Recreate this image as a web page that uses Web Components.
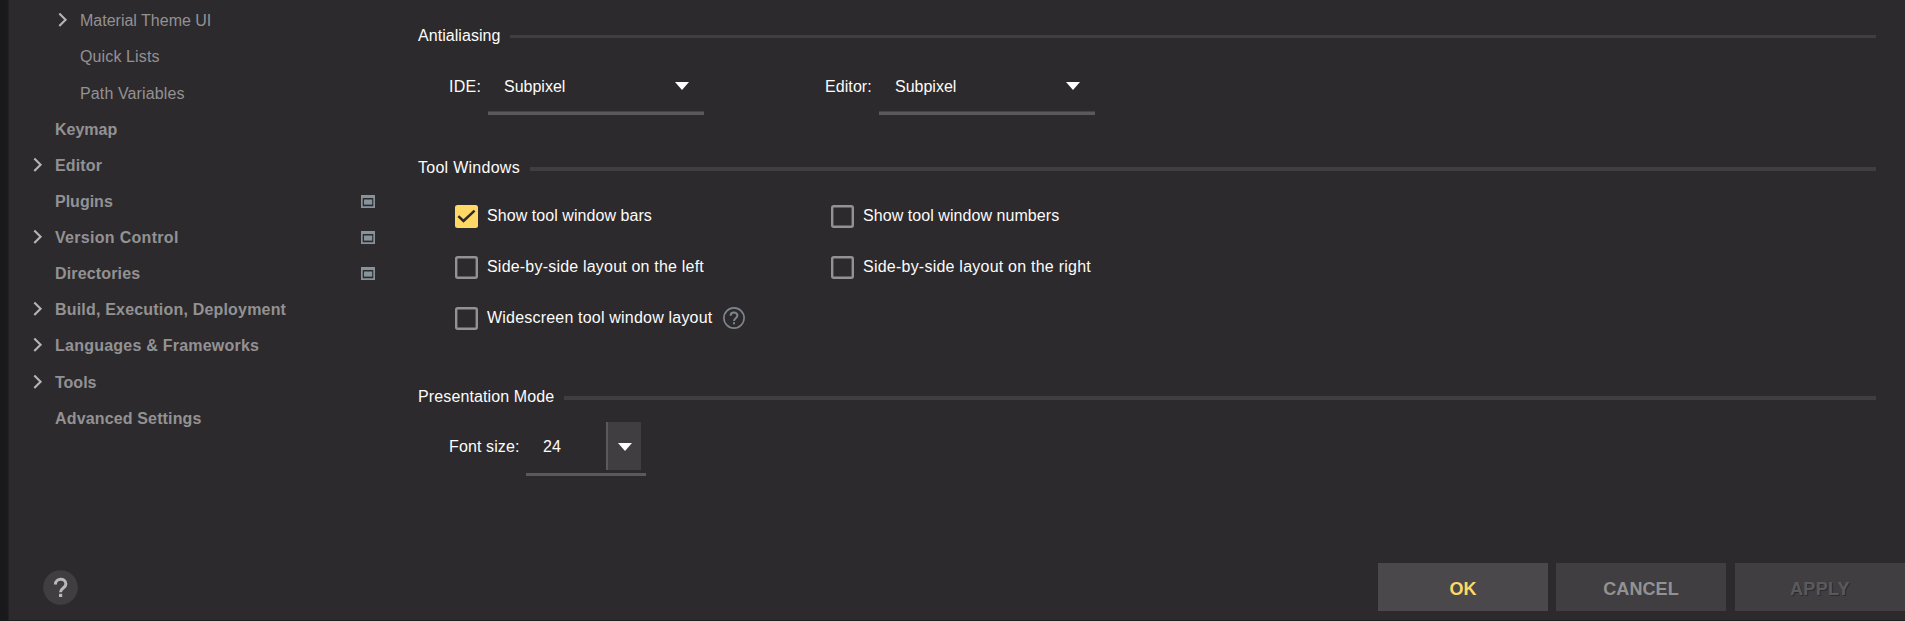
<!DOCTYPE html>
<html lang="en"><head><meta charset="utf-8"><title>Settings</title>
<style>
html,body{margin:0;height:100%;overflow:hidden}
body{background:#2d2a2e;font:16px/20px "Liberation Sans",Arial,sans-serif;color:#fcfcfa}
</style></head><body>
<settings-dialog></settings-dialog>
<script>
function define(name, html){
  const t=document.createElement('template');t.innerHTML=html;
  customElements.define(name,class extends HTMLElement{
    connectedCallback(){
      if(this.shadowRoot)return;
      this.attachShadow({mode:'open'}).append(t.content.cloneNode(true));
    }
  });
}

define('tree-item',`<style>
:host{display:grid;grid-template-columns:16px 1fr 14px;column-gap:7px;align-items:center;height:36px;padding:0 25px 0 23px;color:#939293;font-weight:bold;white-space:nowrap}
:host([nested]){padding-left:48px;font-weight:normal}
.a,.p{visibility:hidden;display:block}
.p{margin-top:1px}
:host([expandable]) .a,:host([project]) .p{visibility:visible}
.t{letter-spacing:var(--ls,0);margin-top:2px}
</style>
<svg class="a" width="16" height="16" viewBox="0 0 16 16"><path d="M2.3 1.5 8.6 7.8 2.3 14.1" fill="none" stroke="#b6b5b6" stroke-width="2.1"/></svg>
<span class="t"><slot></slot></span>
<svg class="p" width="14" height="13" viewBox="0 0 14 13"><path fill="#87939a" fill-rule="evenodd" d="M0 0H14V13H0ZM1.7 3V11.2H12.3V3Z"/><path fill="#87939a" d="M3 4.5H11.2V9.6H3Z"/></svg>`);

define('titled-separator',`<style>
:host{display:flex;align-items:flex-start;height:20px;gap:10px;white-space:nowrap}
i{flex:1;height:var(--line,4px);background:#403e41;margin-top:10px}
.t{letter-spacing:var(--ls,0);margin-top:1px}
</style><span class="t"><slot></slot></span><i></i>`);

define('combo-box',`<style>
:host{display:flex;align-items:flex-start;white-space:nowrap}
.l{padding-top:10px;letter-spacing:var(--ls,0);width:var(--lw)}
.b{box-sizing:border-box;width:216px;height:48px;border-bottom:3px solid #5b595c;box-shadow:inset 0 -1px #454346;padding:10px 15px 0 16px;display:flex;justify-content:space-between}
svg{margin-top:5px;display:block}
</style><span class="l"><slot name="label"></slot></span><div class="b"><span><slot></slot></span>
<svg width="14" height="8" viewBox="0 0 14 8"><path fill="#fff" d="M0 0H14L7 8Z"/></svg></div>`);

define('size-box',`<style>
:host{display:flex;align-items:flex-start;white-space:nowrap}
.l{width:77px;padding-top:15px;letter-spacing:var(--ls,0)}
.b{box-sizing:border-box;width:120px;height:54px;border-bottom:3px solid #5b595c;padding:0 5px 0 17px;display:flex;justify-content:space-between}
.v{padding-top:15px}
.d{box-sizing:border-box;width:35px;height:48px;border-left:2px solid #5b595c;background:#403e41;display:flex;justify-content:center;padding:21px 0 0 1px}
</style><span class="l"><slot name="label"></slot></span><div class="b"><span class="v"><slot></slot></span><div class="d">
<svg width="14" height="8" viewBox="0 0 14 8"><path fill="#fff" d="M0 0H14L7 8Z"/></svg></div></div>`);

define('check-box',`<style>
:host{display:flex;align-items:flex-start;height:24px;white-space:nowrap}
svg{display:block;margin-right:9px}
.on{display:none}
:host([checked]) .on{display:inline}
:host([checked]) .off{display:none}
.t{letter-spacing:var(--ls,0);margin-top:1px}
</style><svg width="23" height="23" viewBox="0 0 23 23">
<rect class="off" x="1.2" y="1.2" width="20.6" height="20.6" rx="1.5" fill="none" stroke="#939293" stroke-width="2.4"/>
<g class="on"><rect width="23" height="23" rx="2.5" fill="#ffd866"/><path d="M3.3 11.2 8.5 16 19.6 5.6" fill="none" stroke="#2d2a2e" stroke-width="2.5"/></g>
</svg><span class="t"><slot></slot></span><slot name="hint"></slot>`);

define('help-hint',`<style>
:host{display:block;width:22px;height:22px}
svg{display:block}
</style><svg width="22" height="22" viewBox="0 0 22 22" fill="none" stroke="#7e868c"><circle cx="11" cy="11" r="10.1" stroke-width="1.6"/><path d="M7.6 8.8C7.6 4.4 14.4 4.4 14.4 8.6C14.4 11.2 11 11.2 11 13.9" stroke-width="2"/><path d="M11 15.2v2" stroke-width="2"/></svg>`);

define('help-button',`<style>
:host{display:block;width:35px;height:35px}
svg{display:block}
</style><svg width="35" height="35" viewBox="0 0 35 35"><circle cx="17.5" cy="17.5" r="17.3" fill="#403e41"/><path d="M12.4 14.4C12.4 7.6 22.9 7.6 22.9 14C22.9 18 17.5 18 17.5 22.2" fill="none" stroke="#bab9ba" stroke-width="3"/><path d="M16 23.8h3.2v3.2h-3.2z" fill="#bab9ba"/></svg>`);

define('dialog-button',`<style>
:host{display:flex;align-items:center;justify-content:center;box-sizing:border-box;width:170px;height:48px;padding-top:4px;background:#403e41;color:#939293;font-weight:bold;font-size:18px;letter-spacing:var(--ls,0)}
:host([primary]){background:#4a484b;color:#ffd866}
:host([disabled]){color:#5b595c;text-shadow:1px 1px #2d2a2e}
</style><slot></slot>`);

define('settings-dialog',`<style>
:host{display:grid;grid-template-columns:9px 391px 1fr;grid-template-rows:1fr 58px;height:621px;box-sizing:border-box}
.edge{grid-row:1/3;background:linear-gradient(90deg,#19181a 0 7px,#1d1b1e 8px,#29262a)}
nav{padding-top:2px}
.tall{height:37px;padding-bottom:1px;box-sizing:border-box}
main{padding:25px 29px 0 18px;display:flex;flex-direction:column}
.combos{display:grid;grid-template-columns:376px 1fr;padding:22px 0 0 31px;height:90px}
.checks{display:grid;grid-template-columns:376px 1fr;grid-auto-rows:51px;padding:28px 0 0 37px;height:181px}
.size{padding:16px 0 0 31px}
help-hint{margin:0 0 0 11px}
footer{grid-column:2/4;display:flex;justify-content:space-between;padding-left:34px;border-bottom:1px solid #221f22}
help-button{margin-top:7px}
.btns{display:flex;gap:8px}
dialog-button[disabled]{margin-left:1px}
</style>
<div class="edge"></div>
<nav>
<tree-item nested expandable>Material Theme UI</tree-item>
<tree-item class="tall" nested style="--ls:.12px">Quick Lists</tree-item>
<tree-item nested style="--ls:.12px">Path Variables</tree-item>
<tree-item>Keymap</tree-item>
<tree-item expandable style="--ls:.15px">Editor</tree-item>
<tree-item project>Plugins</tree-item>
<tree-item expandable project style="--ls:.3px">Version Control</tree-item>
<tree-item project style="--ls:.15px">Directories</tree-item>
<tree-item expandable style="--ls:.19px">Build, Execution, Deployment</tree-item>
<tree-item class="tall" expandable style="--ls:.23px">Languages &amp; Frameworks</tree-item>
<tree-item expandable>Tools</tree-item>
<tree-item style="--ls:.15px">Advanced Settings</tree-item>
</nav>
<main>
<titled-separator style="--line:3px;--ls:.05px">Antialiasing</titled-separator>
<div class="combos">
<combo-box style="--lw:39px;--ls:.25px"><span slot="label">IDE:</span>Subpixel</combo-box>
<combo-box style="--lw:54px;--ls:.08px"><span slot="label">Editor:</span>Subpixel</combo-box>
</div>
<titled-separator style="--ls:.27px">Tool Windows</titled-separator>
<div class="checks">
<check-box checked style="--ls:.06px">Show tool window bars</check-box>
<check-box style="--ls:.06px">Show tool window numbers</check-box>
<check-box style="--ls:.2px">Side-by-side layout on the left</check-box>
<check-box style="--ls:.23px">Side-by-side layout on the right</check-box>
<check-box style="--ls:.2px">Widescreen tool window layout<help-hint slot="hint"></help-hint></check-box>
</div>
<titled-separator style="--ls:.12px">Presentation Mode</titled-separator>
<div class="size"><size-box style="--ls:.12px"><span slot="label">Font size:</span>24</size-box></div>
</main>
<footer><help-button></help-button>
<div class="btns"><dialog-button primary>OK</dialog-button><dialog-button style="--ls:.1px">CANCEL</dialog-button><dialog-button disabled style="--ls:.3px">APPLY</dialog-button></div>
</footer>`);
</script></body></html>
